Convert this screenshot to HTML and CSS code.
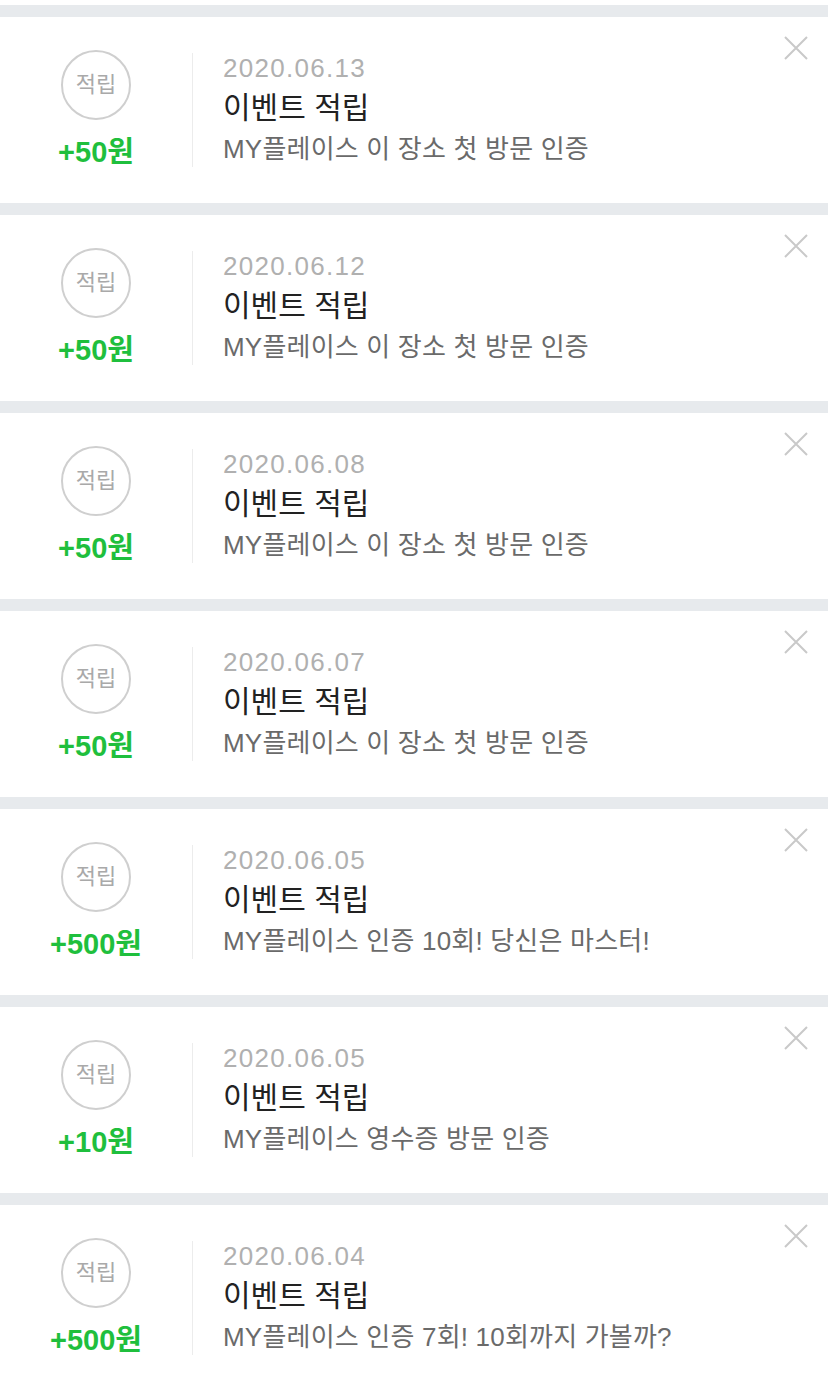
FILE: index.html
```html
<!DOCTYPE html>
<html lang="ko">
<head>
<meta charset="utf-8">
<link rel="stylesheet" href="styles.css">
</head>
<body>
<ul class="list">
  <li class="item">
    <div class="badge-col"><div class="badge">적립</div><div class="amount">+50원</div></div>
    <div class="divider"></div>
    <div class="info"><div class="date">2020.06.13</div><div class="title">이벤트 적립</div><div class="desc">MY플레이스 이 장소 첫 방문 인증</div></div>
    <button class="close" aria-label="삭제"><svg viewBox="0 0 24 24" width="24" height="24"><path d="M1 1L23 23M23 1L1 23" stroke="#c9c9c9" stroke-width="2" fill="none"/></svg></button>
  </li>
  <li class="item">
    <div class="badge-col"><div class="badge">적립</div><div class="amount">+50원</div></div>
    <div class="divider"></div>
    <div class="info"><div class="date">2020.06.12</div><div class="title">이벤트 적립</div><div class="desc">MY플레이스 이 장소 첫 방문 인증</div></div>
    <button class="close" aria-label="삭제"><svg viewBox="0 0 24 24" width="24" height="24"><path d="M1 1L23 23M23 1L1 23" stroke="#c9c9c9" stroke-width="2" fill="none"/></svg></button>
  </li>
  <li class="item">
    <div class="badge-col"><div class="badge">적립</div><div class="amount">+50원</div></div>
    <div class="divider"></div>
    <div class="info"><div class="date">2020.06.08</div><div class="title">이벤트 적립</div><div class="desc">MY플레이스 이 장소 첫 방문 인증</div></div>
    <button class="close" aria-label="삭제"><svg viewBox="0 0 24 24" width="24" height="24"><path d="M1 1L23 23M23 1L1 23" stroke="#c9c9c9" stroke-width="2" fill="none"/></svg></button>
  </li>
  <li class="item">
    <div class="badge-col"><div class="badge">적립</div><div class="amount">+50원</div></div>
    <div class="divider"></div>
    <div class="info"><div class="date">2020.06.07</div><div class="title">이벤트 적립</div><div class="desc">MY플레이스 이 장소 첫 방문 인증</div></div>
    <button class="close" aria-label="삭제"><svg viewBox="0 0 24 24" width="24" height="24"><path d="M1 1L23 23M23 1L1 23" stroke="#c9c9c9" stroke-width="2" fill="none"/></svg></button>
  </li>
  <li class="item">
    <div class="badge-col"><div class="badge">적립</div><div class="amount">+500원</div></div>
    <div class="divider"></div>
    <div class="info"><div class="date">2020.06.05</div><div class="title">이벤트 적립</div><div class="desc">MY플레이스 인증 10회! 당신은 마스터!</div></div>
    <button class="close" aria-label="삭제"><svg viewBox="0 0 24 24" width="24" height="24"><path d="M1 1L23 23M23 1L1 23" stroke="#c9c9c9" stroke-width="2" fill="none"/></svg></button>
  </li>
  <li class="item">
    <div class="badge-col"><div class="badge">적립</div><div class="amount">+10원</div></div>
    <div class="divider"></div>
    <div class="info"><div class="date">2020.06.05</div><div class="title">이벤트 적립</div><div class="desc">MY플레이스 영수증 방문 인증</div></div>
    <button class="close" aria-label="삭제"><svg viewBox="0 0 24 24" width="24" height="24"><path d="M1 1L23 23M23 1L1 23" stroke="#c9c9c9" stroke-width="2" fill="none"/></svg></button>
  </li>
  <li class="item">
    <div class="badge-col"><div class="badge">적립</div><div class="amount">+500원</div></div>
    <div class="divider"></div>
    <div class="info"><div class="date">2020.06.04</div><div class="title">이벤트 적립</div><div class="desc">MY플레이스 인증 7회! 10회까지 가볼까?</div></div>
    <button class="close" aria-label="삭제"><svg viewBox="0 0 24 24" width="24" height="24"><path d="M1 1L23 23M23 1L1 23" stroke="#c9c9c9" stroke-width="2" fill="none"/></svg></button>
  </li>
</ul>
</body>
</html>
```

FILE: styles.css
```css
html, body {
  margin: 0;
  padding: 0;
  background: #fff;
}
body {
  font-family: "Liberation Sans", "Noto Sans CJK KR", sans-serif;
  overflow: hidden;
}
.list {
  list-style: none;
  margin: 0;
  padding: 5px 0 0;
}
.item {
  display: flex;
  align-items: flex-start;
  box-sizing: border-box;
  height: 198px;
  border-top: 12px solid #e7eaed;
  background: #fff;
  padding: 19px 20px 0 0;
}
.badge-col {
  width: 192px;
  margin-top: 14px;
  display: flex;
  flex-direction: column;
  align-items: center;
}
.badge {
  width: 66px;
  height: 66px;
  border: 2px solid #cfcfcf;
  border-radius: 50%;
  display: flex;
  align-items: center;
  justify-content: center;
  color: #a9a9a9;
  font-size: 22px;
  line-height: 1;
}
.amount {
  margin-top: 15px;
  font-size: 29px;
  line-height: 34px;
  font-weight: bold;
  color: #1fbf3d;
  letter-spacing: 0;
}
.divider {
  width: 1px;
  height: 114px;
  margin-top: 17px;
  background: #ececec;
}
.info {
  flex: 1;
  margin-left: 30px;
  margin-top: 14px;
  display: flex;
  flex-direction: column;
}
.date {
  font-size: 26px;
  line-height: 34px;
  color: #b0b0b0;
  letter-spacing: 1.3px;
  margin-top: 1px;
}
.title {
  margin-top: 2px;
  font-size: 30px;
  line-height: 42px;
  color: #222;
}
.desc {
  margin-top: 2px;
  font-size: 26px;
  line-height: 36px;
  color: #6a6a6a;
  letter-spacing: 0.2px;
}
.close {
  width: 24px;
  height: 24px;
  padding: 0;
  border: 0;
  background: none;
  display: block;
}
.close svg {
  display: block;
}
```
